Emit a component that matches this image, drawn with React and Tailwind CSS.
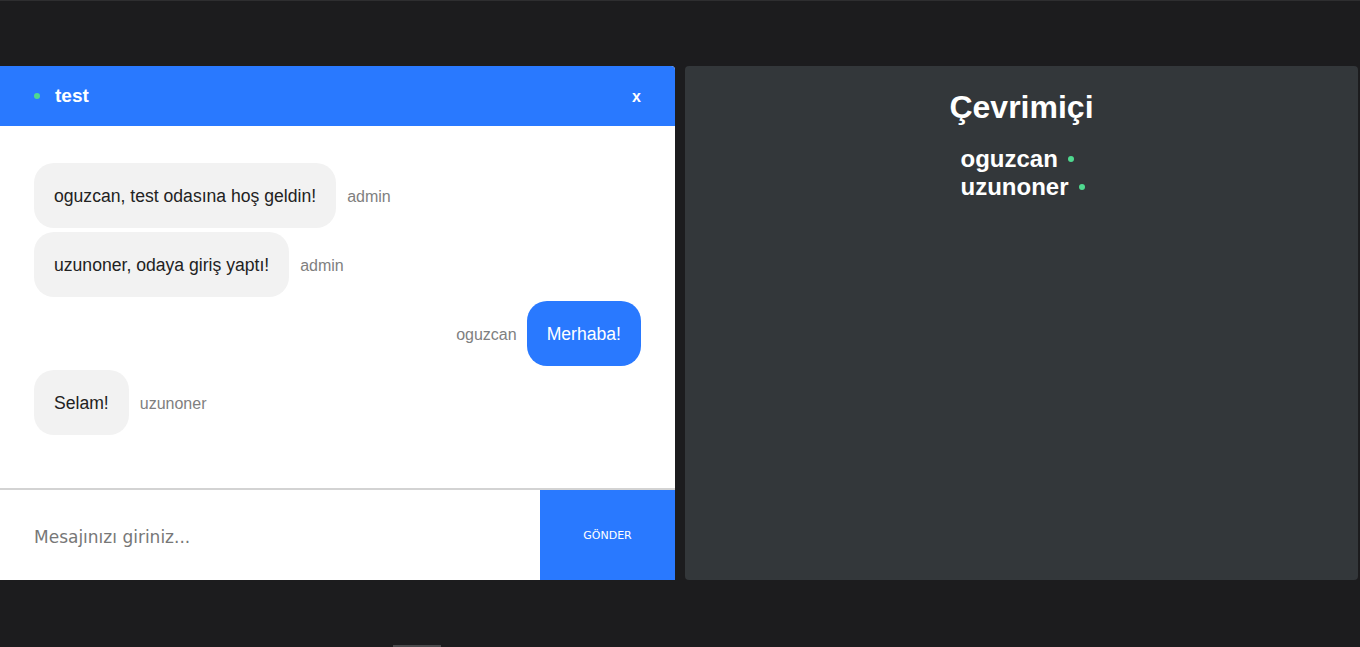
import React from 'react';

const MESSAGES = [
  { id: 1, user: 'admin', text: 'oguzcan, test odasına hoş geldin!', mine: false },
  { id: 2, user: 'admin', text: 'uzunoner, odaya giriş yaptı!', mine: false },
  { id: 3, user: 'oguzcan', text: 'Merhaba!', mine: true },
  { id: 4, user: 'uzunoner', text: 'Selam!', mine: false }
];

const ONLINE = ['oguzcan', 'uzunoner'];

function Message({ m }) {
  const bubble = m.mine
    ? 'bg-[#2979ff] text-white'
    : 'bg-[#f2f2f2] text-[#222]';
  return (
    <div className={`flex items-center ${m.mine ? 'flex-row-reverse' : ''}`}>
      <div className={`h-[65px] flex items-center px-5 pt-[2px] rounded-[20px] text-[17.6px] ${bubble}`}>
        {m.text}
      </div>
      <span className={`pt-[2px] text-[16px] text-[#808080] ${m.mine ? 'mr-[10px]' : 'ml-[11px]'}`}>
        {m.user}
      </span>
    </div>
  );
}

export default function App() {
  return (
    <div className="min-h-screen bg-[#1c1c1e] border-t border-[#2e2e30] font-['Liberation_Sans',Arial,sans-serif] flex flex-col">
      <div className="flex gap-[10px] mt-[65px] pr-[2px]">
        <section className="w-[675px] h-[514px] flex flex-col bg-white rounded-tr-[4px] overflow-hidden">
          <header className="h-[60px] shrink-0 bg-[#2979ff] flex items-center pl-[34px] pr-[34px] text-white">
            <span className="w-[6px] h-[6px] rounded-full bg-[#4fd98f]"></span>
            <span className="ml-[15px] font-bold text-[19px]">test</span>
            <button className="ml-auto pt-[2px] text-[16px] font-bold leading-none">x</button>
          </header>
          <div className="flex-1 flex flex-col gap-1 pt-[37px] px-[34px]">
            {MESSAGES.map(m => (
              <Message key={m.id} m={m} />
            ))}
          </div>
          <form className="h-[92px] shrink-0 flex border-t-2 border-[#d3d3d3]">
            <input
              autoFocus
              className="flex-1 pl-[34px] pt-[5px] outline-none text-[17px] font-['DejaVu_Sans',Verdana,sans-serif] text-[#222] placeholder:text-[#777]"
              placeholder="Mesajınızı giriniz..."
            />
            <button
              type="button"
              className="w-[135px] pt-[2px] bg-[#2979ff] text-white text-[11px] font-['DejaVu_Sans',Verdana,sans-serif]"
            >
              GÖNDER
            </button>
          </form>
        </section>
        <aside className="flex-1 h-[514px] bg-[#33373a] rounded-[4px] flex flex-col items-center text-white">
          <h1 className="mt-[17px] text-[32px] font-bold">Çevrimiçi</h1>
          <ul className="mt-[14px] ml-[2px] flex flex-col">
            {ONLINE.map(u => (
              <li key={u} className="flex items-center text-[24px] font-bold leading-[28px]">
                {u}
                <span className="ml-[10px] w-[6px] h-[6px] rounded-full bg-[#4fd98f]"></span>
              </li>
            ))}
          </ul>
        </aside>
      </div>
      <div className="mt-auto ml-[393px] w-[48px] h-[2px] bg-[#4a4a4c]"></div>
    </div>
  );
}
